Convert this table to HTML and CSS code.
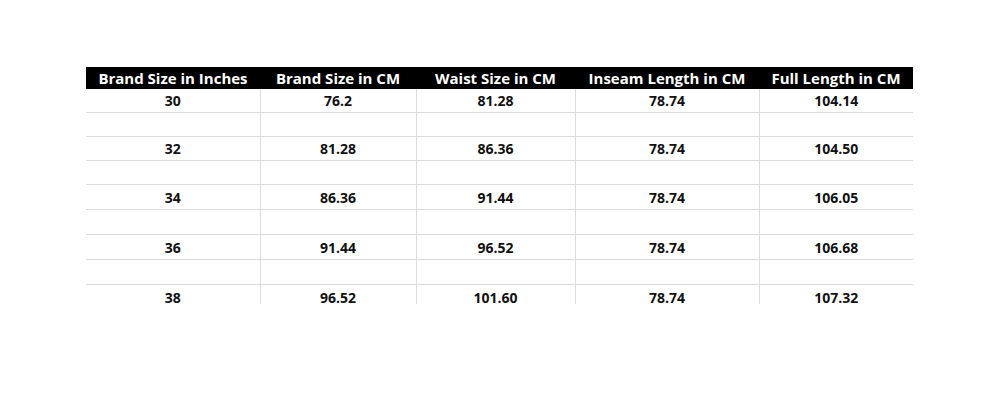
FILE: index.html
```html
<!DOCTYPE html>
<html>
<head>
<meta charset="utf-8">
<link rel="stylesheet" href="styles.css">
</head>
<body>
<div class="page">
  <div class="clip">
    <table class="size-table">
      <colgroup>
        <col class="c1"><col class="c2"><col class="c3"><col class="c4"><col class="c5">
      </colgroup>
      <thead>
        <tr>
          <th>Brand Size in Inches</th>
          <th>Brand Size in CM</th>
          <th>Waist Size in CM</th>
          <th>Inseam Length in CM</th>
          <th>Full Length in CM</th>
        </tr>
      </thead>
      <tbody>
        <tr class="r23"><td>30</td><td>76.2</td><td>81.28</td><td>78.74</td><td>104.14</td></tr>
        <tr class="r24"><td></td><td></td><td></td><td></td><td></td></tr>
        <tr class="r24"><td>32</td><td>81.28</td><td>86.36</td><td>78.74</td><td>104.50</td></tr>
        <tr class="r24"><td></td><td></td><td></td><td></td><td></td></tr>
        <tr class="r25"><td>34</td><td>86.36</td><td>91.44</td><td>78.74</td><td>106.05</td></tr>
        <tr class="r25"><td></td><td></td><td></td><td></td><td></td></tr>
        <tr class="r25"><td>36</td><td>91.44</td><td>96.52</td><td>78.74</td><td>106.68</td></tr>
        <tr class="r25"><td></td><td></td><td></td><td></td><td></td></tr>
        <tr class="r25"><td>38</td><td>96.52</td><td>101.60</td><td>78.74</td><td>107.32</td></tr>
      </tbody>
    </table>
  </div>
</div>
</body>
</html>
```

FILE: styles.css
```css
html, body {
  margin: 0;
  padding: 0;
  background: #ffffff;
}

.page {
  width: 1000px;
  height: 400px;
  padding: 67px 0 0 86px;
  box-sizing: border-box;
}

.clip {
  width: 827px;
  height: 237px;
  overflow: hidden;
}

.size-table {
  width: 827px;
  border-collapse: collapse;
  table-layout: fixed;
  font-family: "Open Sans", "Liberation Sans", sans-serif;
  font-weight: 700;
  font-size: 14px;
  color: #111111;
}

.c1 { width: 174px; }
.c2 { width: 156px; }
.c3 { width: 159px; }
.c4 { width: 184px; }
.c5 { width: 154px; }

.size-table th {
  background: #000000;
  color: #ffffff;
  height: 22px;
  padding: 0;
  text-align: center;
  vertical-align: middle;
  font-weight: 700;
  font-size: 15px;
  white-space: nowrap;
  line-height: 22px;
}

.size-table td {
  padding: 2px 0 0 0;
  text-align: center;
  vertical-align: middle;
  border-top: 1px solid #dcdcdc;
  border-left: 1px solid #dcdcdc;
  line-height: 18px;
  font-size: 14px;
  box-sizing: border-box;
}

.size-table td:first-child {
  border-left: none;
}

.size-table tbody tr:first-child td {
  border-top: none;
}

.r23 td { height: 23px; }
.r24 td { height: 24px; }
.r25 td { height: 25px; }
```
